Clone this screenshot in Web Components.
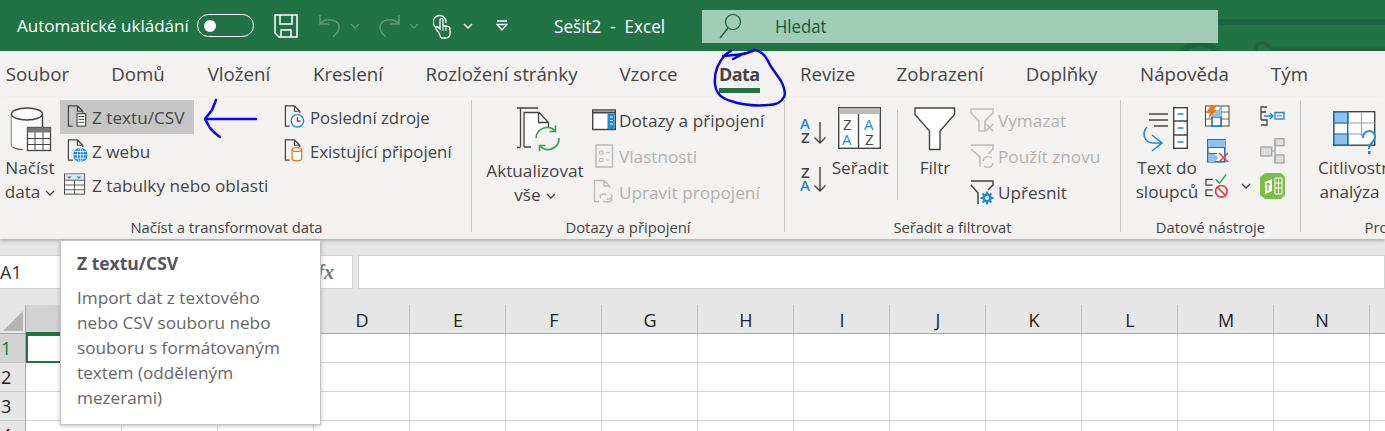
<!DOCTYPE html>
<html lang="cs"><head><meta charset="utf-8"><title>Excel</title>
<style>
html,body{margin:0;padding:0;width:1385px;height:431px;overflow:hidden;background:#fff;font-family:"Open Sans","Noto Sans",sans-serif}
excel-app{display:block}
</style></head><body>
<excel-app></excel-app>
<script>
const chev=(c='#444',w=10)=>`<svg width="${w}" height="6" viewBox="0 0 10 6"><path d="M1 1l4 4 4-4" fill="none" stroke="${c}" stroke-width="1.3"/></svg>`;
const doc=(c='#444')=>`<path d="M2.5 22V1.5H12l5.500 5.500V9M12 1.500V7h5.500M2 22.500H7" fill="none" stroke="${c}" stroke-width="1.3"/>`;
const LT=`font-family="Open Sans" font-weight="600"`;
const IC={
 db:`<svg width="44" height="46" viewBox="0 0 44 46"><path d="M1.500 7v31c0 2.500 6 4 11 4.500" fill="#fbfbfb" stroke="#444" stroke-width="1.400"/><path d="M1.500 7h31v13H17v22C9 42 1.500 40.500 1.500 38z" fill="#fbfbfb"/><ellipse cx="17" cy="7" rx="15.500" ry="6" fill="#fbfbfb" stroke="#444" stroke-width="1.400"/><path d="M32.500 7v13" fill="none" stroke="#444" stroke-width="1.400"/><rect x="17.500" y="20.500" width="23" height="23" fill="#fff" stroke="#444" stroke-width="1.300"/><rect x="17.500" y="20.500" width="23" height="5" fill="#777"/><path d="M17.500 31.500h23M17.500 37.500h23M25 25v18M33 25v18" stroke="#444"/></svg>`,
 txt:`<svg width="24" height="26" viewBox="0 0 24 26">${doc()}<rect x="11.500" y="9.500" width="9" height="13" fill="#fff" stroke="#444" stroke-width="1.200"/><path d="M13 12.500h6M13 15.500h6M13 18.500h6" stroke="#444"/></svg>`,
 web:`<svg width="24" height="26" viewBox="0 0 24 26">${doc()}<circle cx="15" cy="17" r="7.500" fill="#1e8ad6"/><path d="M7.500 17h15M9 13.500h12M9 20.500h12M15 9.500v15" stroke="#fff" stroke-width=".8"/><ellipse cx="15" cy="17" rx="3.200" ry="7.200" fill="none" stroke="#fff" stroke-width=".8"/></svg>`,
 tbl:`<svg width="24" height="24" viewBox="0 0 24 24"><rect x=".5" y=".5" width="21" height="21" fill="#fff" stroke="#444"/><rect x="1" y="1" width="20" height="6" fill="#e4e4e4"/><path d="M.5 7h21M.5 12h21M.5 17h21M11 7v14" stroke="#444" stroke-width=".9"/><path d="M3 3h5l-2.500 2.500zM13 3h5l-2.500 2.500z" fill="#1e8ad6"/></svg>`,
 clock:`<svg width="24" height="26" viewBox="0 0 24 26">${doc()}<circle cx="15" cy="17" r="6.500" fill="#fff" stroke="#1e8ad6" stroke-width="1.500"/><path d="M15 13v4.300h3.500" fill="none" stroke="#444" stroke-width="1.200"/></svg>`,
 cyl:`<svg width="24" height="26" viewBox="0 0 24 26">${doc()}<path d="M9.500 11.500v9.500c0 1.500 2.500 2 5 2s5-.5 5-2v-9.500" fill="#fff" stroke="#e8791c" stroke-width="1.300"/><ellipse cx="14.500" cy="11.500" rx="5" ry="2" fill="#fff" stroke="#e8791c" stroke-width="1.300"/></svg>`,
 refresh:`<svg width="46" height="46" viewBox="0 0 46 46"><path d="M4.500 40V1M1 40.500h3.500M1 1h21" fill="none" stroke="#444" stroke-width="1.300"/><path d="M8 40V5.500h15l9.500 10V21M22.500 5.500V15.500h10M8 40h7" fill="#fbfbfb" stroke="#444" stroke-width="1.300"/><path d="M20 31a11 11 0 0 1 19-7M43 31a11 11 0 0 1-19 8" fill="none" stroke="#33a853" stroke-width="1.700"/><path d="M39.500 18.500v6h-6M23.500 44.500v-6h6" fill="none" stroke="#33a853" stroke-width="1.700"/></svg>`,
 pane:`<svg width="24" height="22" viewBox="0 0 24 22"><rect x=".7" y="1" width="22.600" height="19.500" fill="#fff" stroke="#444" stroke-width="1.400"/><path d="M.7 3.500h22.600" stroke="#444" stroke-width="2"/><rect x="15.500" y="4.500" width="7" height="15.500" fill="#1e8ad6"/><path d="M18 8h3M18 11.500h3M18 15h3" stroke="#fff"/></svg>`,
 props:`<svg width="19" height="24" viewBox="0 0 19 24"><rect x="1" y="1" width="16.500" height="22" fill="none" stroke="#bbb" stroke-width="1.500"/><path d="M4.500 7h3.500v3H4.500zM4.500 14.500h3.500v3H4.500z" fill="none" stroke="#bbb"/><path d="M11 8.500h3.500M11 16h3.500" stroke="#bbb"/></svg>`,
 link:`<svg width="24" height="26" viewBox="0 0 24 26">${doc('#bbb')}<path d="M9 19c-3-3 3-5 5-3M19 15c3 3-1 6-4 5M11 22c3 2 9 1 9-2" fill="none" stroke="#bbb" stroke-width="1.400"/></svg>`,
 az:`<svg style="overflow:visible" width="27" height="30" viewBox="0 0 27 30"><text x="0" y="12" ${LT} font-size="15" fill="#1e8ad6">A</text><text x="1" y="26" ${LT} font-size="15" fill="#444">Z</text><path d="M20 5v21M14.500 20.500l5.500 5.500 5.500-5.500" fill="none" stroke="#444" stroke-width="1.400"/></svg>`,
 za:`<svg style="overflow:visible" width="27" height="30" viewBox="0 0 27 30"><text x="1" y="13" ${LT} font-size="15" fill="#444">Z</text><text x="0" y="26" ${LT} font-size="15" fill="#1e8ad6">A</text><path d="M20 2v24M14.500 20.500l5.500 5.500 5.500-5.500" fill="none" stroke="#444" stroke-width="1.400"/></svg>`,
 sort:`<svg width="44" height="44" viewBox="0 0 44 44"><rect x=".7" y=".7" width="41.600" height="40.600" fill="#fff" stroke="#444" stroke-width="1.400"/><rect x="1" y="1" width="41" height="6" fill="#bbb"/><path d="M20.500 7v35" stroke="#444" stroke-width="1.400"/><text x="5" y="23" font-family="Open Sans" font-size="15" fill="#444">Z</text><text x="4" y="38" font-family="Open Sans" font-size="15" fill="#1e8ad6">A</text><text x="26" y="23" font-family="Open Sans" font-size="15" fill="#1e8ad6">A</text><text x="27" y="38" font-family="Open Sans" font-size="15" fill="#444">Z</text></svg>`,
 funnel:`<svg width="42" height="44" viewBox="0 0 42 44"><path d="M1 1h39.500v6.500L26 24v18.500H15.500V24L1 7.500z" fill="#fff" stroke="#444" stroke-width="1.400"/></svg>`,
 fx:`<svg width="25" height="25" viewBox="0 0 25 25"><path d="M1 1h22v4l-8 8v10h-6V13L1 5z" fill="none" stroke="#bbb" stroke-width="1.500"/><path d="M16 16l7 7M23 16l-7 7" stroke="#bbb" stroke-width="1.300"/></svg>`,
 fr:`<svg width="25" height="25" viewBox="0 0 25 25"><path d="M1 1h22v4l-5 5M10 23V13L1 5" fill="none" stroke="#bbb" stroke-width="1.500"/><path d="M13 17a5.500 5.500 0 0 1 9-3M23 19a5.500 5.500 0 0 1-9 3" fill="none" stroke="#bbb" stroke-width="1.300"/></svg>`,
 fa:`<svg width="25" height="25" viewBox="0 0 25 25"><path d="M1 1h22v4l-5 5M8 24V13L1 5" fill="none" stroke="#444" stroke-width="1.500"/><circle cx="17" cy="18" r="3.500" fill="none" stroke="#1e8ad6" stroke-width="2.500"/><path d="M17 11.500v13M10.500 18h13M12.500 13.500l9 9M21.500 13.500l-9 9" stroke="#1e8ad6" stroke-width="1.800"/><circle cx="17" cy="18" r="2" fill="#f3f2f1"/></svg>`,
 ttc:`<svg width="50" height="46" viewBox="0 0 50 46"><path d="M7 7h19M7 13h19M12 19h14" stroke="#444" stroke-width="1.300" fill="none"/><path d="M5 20C0 25 1 36 12 36h8M10 28l10 8-10 8" fill="none" stroke="#1e8ad6" stroke-width="1.600"/><rect x="31.700" y=".7" width="13.600" height="40.600" fill="#fff" stroke="#444" stroke-width="1.400"/><path d="M32 14h13M32 28h13" stroke="#444" stroke-width="1.300"/><path d="M35.500 7h6M35.500 21h6M35.500 35h6" stroke="#1e8ad6" stroke-width="1.400"/></svg>`,
 flash:`<svg width="25" height="22" viewBox="0 0 25 22"><rect x=".5" y="1" width="23.500" height="20" fill="#fff" stroke="#444"/><path d="M8 21V7M16 1v20M1 7h23M1 14h23" stroke="#444" stroke-width=".8"/><path d="M7 21V12h9v9z" fill="#fff" stroke="#1e6fb5" stroke-width="1.600"/><path d="M16 1v11H7z" fill="#8cc3ee"/><path d="M6 0h6L9 5h3L3 14l2-6H1z" fill="#e8791c"/></svg>`,
 dup:`<svg width="22" height="24" viewBox="0 0 22 24"><rect x=".8" y=".8" width="17" height="22" fill="#fff" stroke="#1e6fb5" stroke-width="1.600"/><rect x="1" y="1" width="17" height="7" fill="#8cc3ee"/><path d="M1 8.500h17M1 14.500h9" stroke="#1e6fb5" stroke-width="1.200"/><path d="M1.500 15h6l4 4-4 4h-6z" fill="#8cc3ee"/><path d="M12 14l9 9M21 14l-9 9" stroke="#e8404a" stroke-width="1.600"/></svg>`,
 valid:`<svg width="26" height="26" viewBox="0 0 26 26"><path d="M8 6H1v6h7M8 17H1v6h7" fill="none" stroke="#444" stroke-width="1.300"/><path d="M11 6l4 4 7-9" fill="none" stroke="#33a853" stroke-width="1.600"/><circle cx="17" cy="18.500" r="6" fill="#fff" stroke="#e8404a" stroke-width="1.800"/><path d="M13 14.500l8 8" stroke="#e8404a" stroke-width="1.800"/></svg>`,
 cons:`<svg width="25" height="20" viewBox="0 0 25 20"><path d="M7 1H1v5h5M1 14h6v5H1M1 6v8" fill="none" stroke="#444" stroke-width="1.300"/><path d="M4 10h9M10 7l3 3-3 3" fill="none" stroke="#1e8ad6" stroke-width="1.400"/><rect x="15" y="6.500" width="9" height="6.500" fill="none" stroke="#1e8ad6" stroke-width="1.400"/><path d="M17 9.800h5" stroke="#1e8ad6"/></svg>`,
 rel:`<svg width="25" height="26" viewBox="0 0 25 26"><rect x="15" y=".7" width="9" height="7" fill="#ddd" stroke="#aaa" stroke-width="1.500"/><rect x=".7" y="9" width="11" height="9" fill="#ddd" stroke="#aaa" stroke-width="1.500"/><rect x="15" y="17" width="9" height="8" fill="#ddd" stroke="#aaa" stroke-width="1.500"/><path d="M12 13h3M15 4v18" stroke="#aaa" stroke-width="1.500"/></svg>`,
 pivot:`<svg width="25" height="26" viewBox="0 0 25 26"><path d="M0 4l5-4h16l4 4v18l-4 4H5l-5-4z" fill="#7cbc47"/><path d="M5 9v12l7-3V6z" fill="#fff"/><path d="M8 18v-8M8 10l-2 2.500M8 10l2 2.500" stroke="#5a9a2c"/><path d="M15 5h7v16h-7zM15 10h7M15 15h7M18.500 5v16" fill="none" stroke="#fff"/></svg>`,
 wha:`<svg width="44" height="44" viewBox="0 0 44 44"><rect x=".7" y=".7" width="41" height="33.500" fill="#fff" stroke="#444" stroke-width="1.400"/><path d="M14.500 1v33M28.500 1v24M1 12h41M1 23h32" stroke="#999" stroke-width="1"/><rect x="1" y="1" width="14" height="11" fill="#8cc3ee" stroke="#1e6fb5"/><rect x="1" y="23" width="14" height="11" fill="#8cc3ee" stroke="#1e6fb5"/><rect x=".7" y=".7" width="14" height="33.500" fill="none" stroke="#1e6fb5" stroke-width="1.400"/><path d="M30 27c0-9 12-9 12-1 0 6-6 5-6 12" fill="none" stroke="#1e8ad6" stroke-width="2"/><rect x="35" y="40" width="2.500" height="3" fill="#1e8ad6"/></svg>`
};
function def(name,css,html){
 customElements.define(name,class extends HTMLElement{
  constructor(){super();this.attachShadow({mode:'open'}).innerHTML=`<style>${css}</style>${typeof html==='function'?html(this):html}`;}
 });
}
def('rb-cmd',`:host{display:flex;align-items:center;height:var(--h,34px);font-size:var(--fs,17.200px);color:#444;white-space:nowrap;box-sizing:border-box;padding-left:var(--pl,6px);gap:var(--gap,3px)}
:host([hot]){background:#c6c6c6}:host([off]){color:#b1b1b1}
.i{display:flex;width:var(--iw,23px);justify-content:center;align-items:center;flex:none}`,
 e=>`<span class="i">${IC[e.getAttribute('i')]||''}</span><slot></slot>`);
def('rb-big',`:host{display:flex;flex:none;flex-direction:column;align-items:center;font-size:17.200px;line-height:24px;color:#444;white-space:nowrap;text-align:center;width:var(--bw,60px);padding-top:var(--pt,7px)}
.i{display:flex;height:var(--ih,49px);justify-content:center;align-items:flex-start;margin-left:var(--ix,0)}
.t{display:block}`,
 e=>`<span class="i">${IC[e.getAttribute('i')]||''}</span><span class="t"><slot></slot></span>`);
def('rb-chev',`:host{display:inline-block;vertical-align:middle;margin:0 0 0 5px;line-height:0}`,chev());
def('rb-col',`:host{display:flex;flex-direction:column;padding-top:var(--pt,2px);width:var(--cw,auto);flex:none}`,`<slot></slot>`);
def('rb-group',`:host{display:grid;grid-template-rows:1fr 14px;width:var(--gw);flex:none;box-sizing:border-box;border-right:1px solid #c8c6c4;height:132px;margin-top:3px}
:host([last]){border-right:0}
.c{display:flex;min-height:0}
.l{text-align:center;font-size:14.800px;line-height:20px;color:#444;white-space:nowrap;margin-top:-1px;padding-right:var(--lp,0)}`,
 e=>`<div class="c"><slot></slot></div><div class="l">${e.getAttribute('label')}</div>`);
def('xl-titlebar',`:host{display:flex;align-items:center;height:51px;background:#217346;color:#fff;position:relative;overflow:hidden;font-size:17px;white-space:nowrap;padding-left:17px;box-sizing:border-box}
.tog{width:57px;height:23px;border:1.300px solid #fff;border-radius:12px;box-sizing:border-box;margin-left:8px;display:flex;align-items:center;padding-left:6px;flex:none}
.tog i{width:12px;height:12px;background:#fff;border-radius:50%}
.qa{display:flex;align-items:center;margin-left:20px}
.name{margin-left:46px;width:148px;font-size:18px;transform:scaleX(.95);transform-origin:left;white-space:pre;flex:none}
.search{position:relative;z-index:1;width:516px;height:33px;flex:none;background:#a0cdb5;margin-top:1px;display:flex;align-items:center;padding-left:17px;box-sizing:border-box;color:#17583a;font-size:18px}
.search span{margin-left:32px;transform:scaleX(.93);transform-origin:left}
.wm{position:absolute;right:0;top:0}`,
`<span>Automatické ukládání</span><span class="tog"><i></i></span>
<span class="qa">
<svg width="24" height="24" viewBox="0 0 24 24"><path d="M1 1h22v22H5l-4-4z" fill="none" stroke="#fff" stroke-width="1.500"/><path d="M6 1v9h12V1M7 23v-7h10v7" fill="none" stroke="#fff" stroke-width="1.500"/></svg>
<svg style="margin-left:20px" width="24" height="24" viewBox="0 0 24 24"><path d="M2 1v9h9M2 10c5-7 20-5 19 4 0 4-3 6-6 9" fill="none" stroke="#5d9a78" stroke-width="1.500"/></svg>
<svg style="margin-left:8px" width="10" height="6" viewBox="0 0 10 6"><path d="M1 1l4 4 4-4" fill="none" stroke="#5d9a78" stroke-width="1.300"/></svg>
<svg style="margin-left:17px" width="24" height="24" viewBox="0 0 24 24"><path d="M22 1v9h-9M22 10c-5-7-20-5-19 4 0 4 3 6 6 9" fill="none" stroke="#5d9a78" stroke-width="1.500"/></svg>
<svg style="margin-left:8px" width="10" height="6" viewBox="0 0 10 6"><path d="M1 1l4 4 4-4" fill="none" stroke="#5d9a78" stroke-width="1.300"/></svg>
<svg style="margin-left:14px" width="18" height="26" viewBox="0 0 18 26"><path d="M4 15a6.500 6.500 0 1 1 9-5" fill="none" stroke="#fff" stroke-width="1.300"/><path d="M6 20l-3-4c-1-2 1-3 2.500-1.500L7 16V7c0-2 3-2 3 0v6h2c3 0 5 1 5 3v5c0 3-2 4-5 4H9c-1 0-2-2-3-5z" fill="#217346" stroke="#fff" stroke-width="1.300"/><path d="M10 14v4M13 14v4" stroke="#fff"/></svg>
<svg style="margin-left:12px" width="10" height="6" viewBox="0 0 10 6"><path d="M1 1l4 4 4-4" fill="none" stroke="#fff" stroke-width="1.300"/></svg>
<svg style="margin-left:23px" width="12" height="11" viewBox="0 0 12 11"><path d="M1 1h10" stroke="#fff" stroke-width="1.500"/><path d="M1 4.500h10L6 10z" fill="none" stroke="#fff" stroke-width="1.300"/></svg>
</span>
<span class="name">Sešit2  -  Excel</span>
<span class="search"><svg width="24" height="26" viewBox="0 0 24 26"><circle cx="14" cy="9" r="7.500" fill="none" stroke="#17583a" stroke-width="1.200"/><path d="M9 15L1 25" stroke="#17583a" stroke-width="1.300"/></svg><span>Hledat</span></span>
<svg class="wm" width="230" height="51" viewBox="0 0 230 51"><path d="M60 22h170" stroke="#1f6440" stroke-width="6"/><circle cx="45" cy="68" r="24" fill="none" stroke="#1f6440" stroke-width="6"/><path d="M100 51c0-10 12-10 14-3M114 49.500h116" fill="none" stroke="#1f6440" stroke-width="4"/></svg>`);
def('xl-tab',`:host{display:block;flex:none;height:46px;font-size:18.700px;line-height:46px;color:#444;white-space:nowrap;position:relative;width:var(--w);text-align:center}
:host([on]){font-weight:700;font-size:18px;letter-spacing:-.6px}
:host([on])::after{content:"";position:absolute;left:0;right:-1px;top:37px;height:5px;background:#217346}`,`<slot></slot>`);
def('xl-tabs',`:host{display:flex;height:46px;background:#f3f2f1;padding-left:5px;gap:41px;box-sizing:border-box;overflow:hidden}`,`<slot></slot>`);
def('xl-ribbon',`:host{display:flex;height:142px;background:#f3f2f1;box-shadow:0 2px 3px rgba(0,0,0,.22);position:relative;overflow:hidden;box-sizing:border-box}`,`<slot></slot>`);
def('xl-formula',`:host{display:flex;height:66px;background:#e6e6e6;padding-top:16px;box-sizing:border-box;gap:5px;align-items:flex-start}
.b{background:#fff;border:1px solid #d4d4d4;height:34px;box-sizing:border-box}
.n{width:272px;font-size:18px;line-height:33px;color:#333;border-left:0}
.fx{width:76px;display:flex;justify-content:flex-end;align-items:center;padding-right:18px;box-sizing:border-box;font:italic 700 20px "Liberation Serif",serif;color:#777}
.f{flex:1}`,`<div class="b n">A1</div><div class="b fx">fx</div><div class="b f"></div>`);
const cols=['','','','D','E','F','G','H','I','J','K','L','M','N',''];
def('xl-sheet',`:host{display:grid;grid-template-columns:26px repeat(15,96px);grid-template-rows:29px repeat(3,29px) 29px;font-size:18px;color:#222;overflow:hidden;height:126px;background:#fff}
.c{box-sizing:border-box;border-right:1px solid #d4d4d4;border-bottom:1px solid #d4d4d4}
.h{background:#e6e6e6;text-align:center;line-height:30px;border-right:1px solid #bbb;border-bottom:1px solid #a8a8a8;padding-left:1px}
.r{background:#e6e6e6;line-height:28px;padding-left:1px;border-right:1px solid #a8a8a8;border-bottom:1px solid #c8c8c8}
.sel{background:#d2d2d2}.s1{color:#217346}
.ch{border-bottom:2px solid #217346}
.corner{background:#e6e6e6;border-right:1px solid #a8a8a8;border-bottom:1px solid #a8a8a8;position:relative}
.corner svg{position:absolute;right:2px;bottom:2px}
.a1{border:2px solid #217346}`,
 ()=>{let h=`<div class="c corner"><svg width="20" height="20"><path d="M20 0v20H0z" fill="#b4b4b4"/></svg></div>`;
 cols.forEach((c,i)=>h+=`<div class="c h ${i==0?'sel ch':''}">${c}</div>`);
 for(let r=1;r<=4;r++){h+=`<div class="c r ${r==1?'sel s1':''}">${r}</div>`;cols.forEach((c,i)=>h+=`<div class="c ${r==1&&i==0?'a1':''}"></div>`);}
 return h;});
def('xl-tooltip',`:host{position:absolute;left:60px;top:240px;width:261px;height:185px;box-sizing:border-box;background:#fff;border:1px solid #c4c4c4;box-shadow:0 1px 4px rgba(0,0,0,.25);padding:10px 16px;color:#666;font-size:17.200px;line-height:25px}
.t{font-weight:700;color:#555;margin-bottom:9px;font-size:17.500px}`,
`<div class="t">Z textu/CSV</div><div>Import dat z textového<br>nebo CSV souboru nebo<br>souboru s formátovaným<br>textem (odděleným<br>mezerami)</div>`);
def('xl-ink',`:host{position:absolute;left:0;top:0;width:1385px;height:431px;pointer-events:none}svg{display:block}`,
`<svg width="1385" height="431" viewBox="0 0 1385 431"><g fill="none" stroke="#0505e6" stroke-width="2.500" stroke-linecap="round" stroke-linejoin="round">
<path d="M206 119h50"/><path d="M216 100l-4 10-7 9 5 9 6 6 4 3"/>
<path d="M723 56c8-1 18-1 24-3l8-3c6 1 10 5 13 11 3 7 8 12 13 20 3 6 5 12 3 16-3 6-9 8-16 8-12 1-26 0-37-4-8-2-15-7-16-17-1-10 2-20 10-29 2-2 4-3 6-4M733 59l12-6"/></g></svg>`);
def('excel-app',`:host{display:block;position:relative;width:1385px;height:431px;overflow:hidden}`,
`<xl-titlebar></xl-titlebar>
<xl-tabs>
<xl-tab style="--w:65px">Soubor</xl-tab><xl-tab style="--w:54px">Domů</xl-tab><xl-tab style="--w:66px">Vložení</xl-tab><xl-tab style="--w:68px">Kreslení</xl-tab><xl-tab style="--w:153px;margin-left:3px">Rozložení stránky</xl-tab><xl-tab style="--w:59px">Vzorce</xl-tab><xl-tab on style="--w:40px">Data</xl-tab><xl-tab style="--w:55px">Revize</xl-tab><xl-tab style="--w:88px">Zobrazení</xl-tab><xl-tab style="--w:73px">Doplňky</xl-tab><xl-tab style="--w:91px">Nápověda</xl-tab><xl-tab style="--w:36px">Tým</xl-tab>
</xl-tabs>
<xl-ribbon>
<rb-group label="Načíst a transformovat data" style="--gw:472px;--lp:18px">
 <rb-big i="db" style="--bw:60px;--ix:4px">Načíst<br>data<rb-chev></rb-chev></rb-big>
 <rb-col style="--cw:223px;--pt:0px"><rb-cmd i="txt" hot style="align-self:flex-start;width:134px">Z textu/CSV</rb-cmd><rb-cmd i="web">Z webu</rb-cmd><rb-cmd i="tbl" style="--pl:4px;--gap:5px">Z tabulky nebo oblasti</rb-cmd></rb-col>
 <rb-col style="--pt:0px;--fs:16.800px"><rb-cmd i="clock" style="--pl:0px;--gap:4px">Poslední zdroje</rb-cmd><rb-cmd i="cyl" style="--pl:0px;--gap:4px">Existující připojení</rb-cmd></rb-col>
</rb-group>
<rb-group label="Dotazy a připojení" style="--gw:313px">
 <rb-big i="refresh" style="--bw:112px;--ih:52px;--ix:8px;margin-left:7px">Aktualizovat<br>vše<rb-chev></rb-chev></rb-big>
 <rb-col><rb-cmd i="pane" style="--h:36px;--iw:26px;--pl:0px;--gap:2px">Dotazy a připojení</rb-cmd><rb-cmd i="props" off style="--h:36px;--iw:26px;--pl:0px;--gap:2px">Vlastnosti</rb-cmd><rb-cmd i="link" off style="--h:36px;--iw:26px;--pl:0px;--gap:2px">Upravit propojení</rb-cmd></rb-col>
</rb-group>
<rb-group label="Seřadit a filtrovat" style="--gw:336px">
 <rb-col style="--cw:48px;--pt:17px;padding-left:15px;box-sizing:border-box;gap:18px"><span style="line-height:0">${IC.az}</span><span style="line-height:0">${IC.za}</span></rb-col>
 <rb-big i="sort" style="--bw:54px">Seřadit</rb-big>
 <div style="width:1px;height:90px;background:#c8c6c4;margin:10px 0 0 10px"></div>
 <rb-big i="funnel" style="--bw:72px;margin-left:1px">Filtr</rb-big>
 <rb-col style="margin-left:-1px"><rb-cmd i="fx" off style="--h:36px;--iw:25px;--pl:0px">Vymazat</rb-cmd><rb-cmd i="fr" off style="--h:36px;--iw:25px;--pl:0px">Použít znovu</rb-cmd><rb-cmd i="fa" style="--h:36px;--iw:25px;--pl:0px">Upřesnit</rb-cmd></rb-col>
</rb-group>
<rb-group label="Datové nástroje" style="--gw:180px">
 <rb-big i="ttc" style="--bw:84px;margin-left:4px">Text do<br>sloupců</rb-big>
 <rb-col style="--cw:55px;--pt:0px;margin:-2px 0 0 -4px"><rb-cmd i="flash" style="--h:35px;--iw:25px;--pl:0px"></rb-cmd><rb-cmd i="dup" style="--h:35px;--iw:25px;--pl:0px"></rb-cmd><rb-cmd i="valid" style="--h:35px;--iw:25px;--pl:0px;--gap:6px"><rb-chev></rb-chev></rb-cmd></rb-col>
 <rb-col style="--pt:0px;margin-top:-2px"><rb-cmd i="cons" style="--h:35px;--iw:25px;--pl:0px"></rb-cmd><rb-cmd i="rel" style="--h:35px;--iw:25px;--pl:0px"></rb-cmd><rb-cmd i="pivot" style="--h:35px;--iw:25px;--pl:0px"></rb-cmd></rb-col>
</rb-group>
<rb-group last label="Prognóza" style="--gw:192px">
 <rb-big i="wha" style="--bw:112px;--pt:11px;--ih:45px;--ix:-4px">Citlivostní<br>analýza<rb-chev></rb-chev></rb-big>
</rb-group>
</xl-ribbon>
<xl-formula></xl-formula>
<xl-sheet></xl-sheet>
<xl-tooltip></xl-tooltip>
<xl-ink></xl-ink>`);
</script>
</body></html>
